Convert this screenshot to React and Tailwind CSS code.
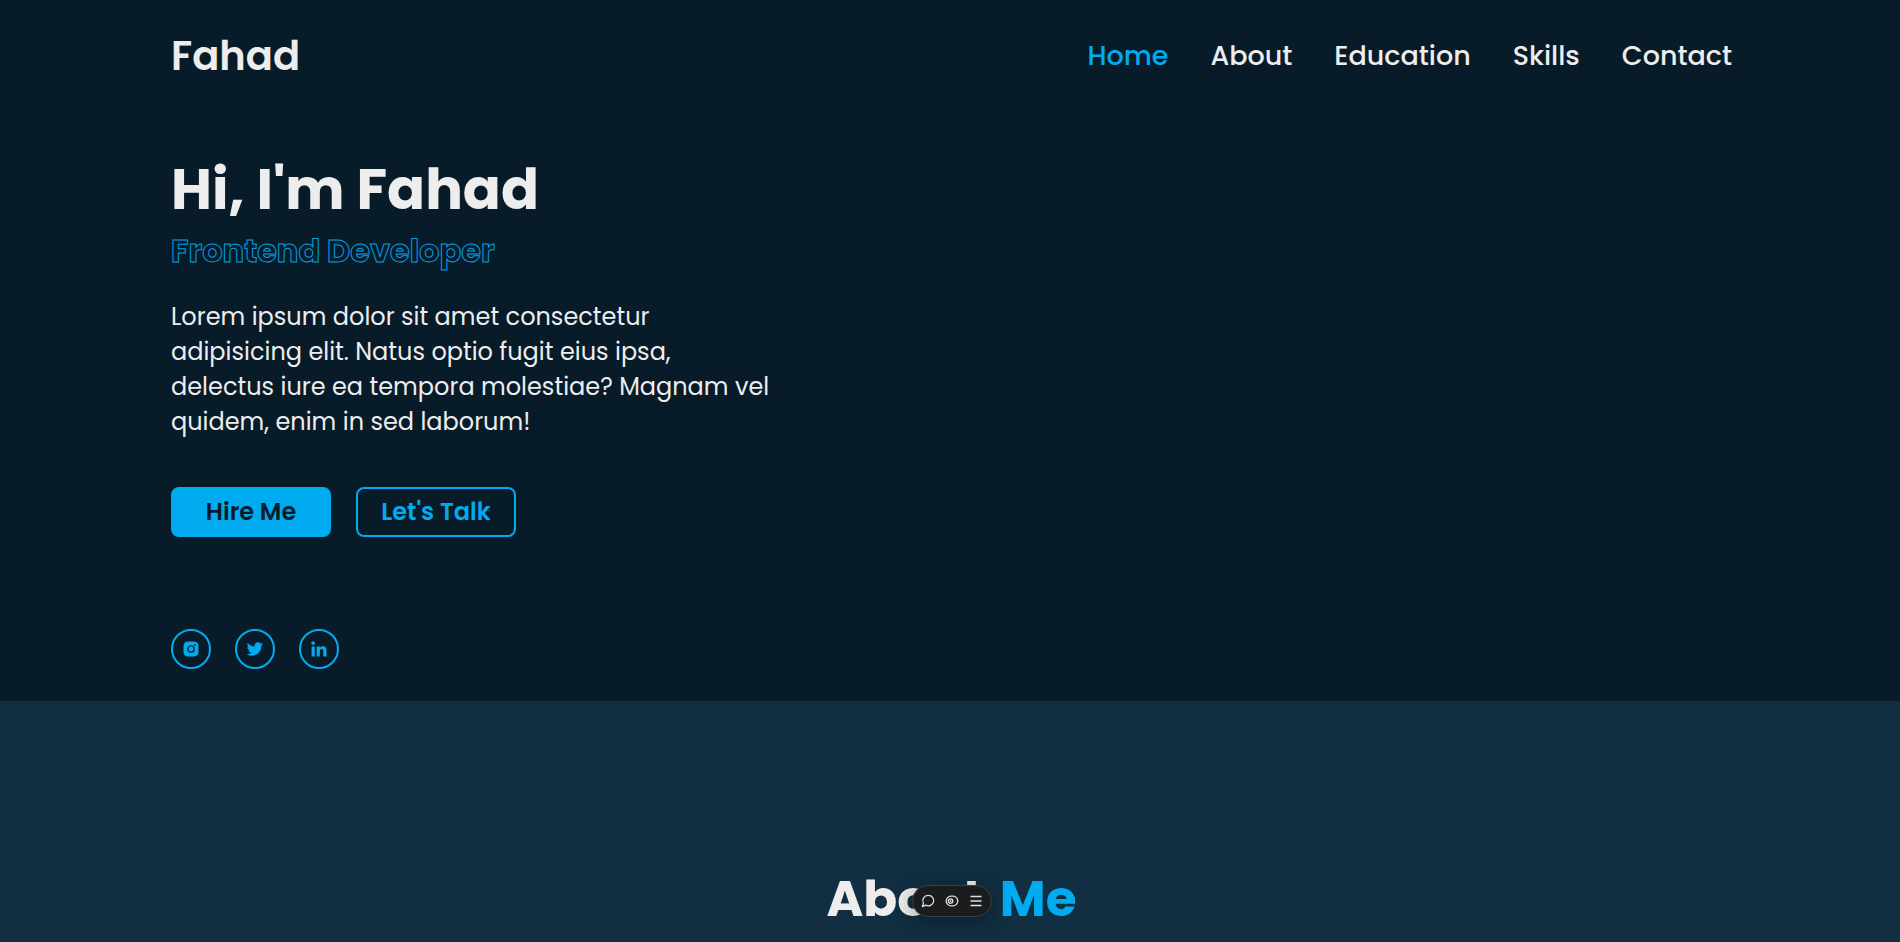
import { BiLogoInstagramAlt, BiLogoTwitter, BiLogoLinkedin } from "react-icons/bi";

const links = ["Home", "About", "Education", "Skills", "Contact"];

const socials = [
  { name: "Instagram", Icon: BiLogoInstagramAlt },
  { name: "Twitter", Icon: BiLogoTwitter },
  { name: "LinkedIn", Icon: BiLogoLinkedin },
];

function Header() {
  return (
    <header className="flex items-center justify-between pt-6 pr-42 pl-[9%]">
      <a href="#home" className="text-[40px] leading-[64px] font-semibold">
        Fahad
      </a>
      <nav className="flex gap-[42px]">
        {links.map((label) => (
          <a
            key={label}
            href={"#" + label.toLowerCase()}
            className={
              label === "Home"
                ? "text-[27px] leading-10 font-medium text-[#00abf0]"
                : "text-[27px] leading-10 font-medium"
            }
          >
            {label}
          </a>
        ))}
      </nav>
    </header>
  );
}

function Hero() {
  return (
    <section id="home" className="pt-[68px] pr-42 pb-8 pl-[9%]">
      <h1 className="text-[56px] leading-[68px] font-bold">Hi, I'm Fahad</h1>
      <h2 className="mt-[3px] text-[32px] leading-[48px] font-bold text-transparent [-webkit-text-stroke:1px_#00a0e2]">
        Frontend Developer
      </h2>
      <p className="mt-6 max-w-[600px] text-[24px] leading-[35px]">
        Lorem ipsum dolor sit amet consectetur adipisicing elit. Natus optio
        fugit eius ipsa, delectus iure ea tempora molestiae? Magnam vel quidem,
        enim in sed laborum!
      </p>
      <div className="mt-12 flex gap-[25px]">
        <button
          type="button"
          className="h-[50px] w-40 rounded-lg border-2 border-[#00abf0] bg-[#00abf0] text-2xl font-semibold text-[#081b29]"
        >
          Hire Me
        </button>
        <button
          type="button"
          className="h-[50px] w-40 rounded-lg border-2 border-[#00abf0] text-2xl font-semibold text-[#00abf0]"
        >
          Let's Talk
        </button>
      </div>
      <div className="mt-[92px] flex gap-6">
        {socials.map(({ name, Icon }) => (
          <a
            key={name}
            href={"#" + name.toLowerCase()}
            aria-label={name}
            className="flex size-10 items-center justify-center rounded-full border-2 border-[#00abf0] text-[#00abf0]"
          >
            <Icon className="size-5" />
          </a>
        ))}
      </div>
    </section>
  );
}

function Toolbar() {
  return (
    <div className="fixed inset-x-0 bottom-[25px] flex justify-center pl-1">
      <div className="flex h-8 w-20 items-center justify-center gap-2 rounded-full border border-[#3b3f42] bg-[#1a1c1e] text-[#dedede] shadow-[0_4px_20px_rgba(0,0,0,0.35)]">
        <button type="button" aria-label="Comments">
          <svg className="size-4" viewBox="0 0 16 16" fill="none" stroke="currentColor" strokeWidth="1.3" strokeLinejoin="round">
            <path d="M8.4 2.4a5.4 5.2 0 1 1-2.6 9.8L2.5 13.7l.9-3.6A5.4 5.2 0 0 1 8.4 2.4Z" />
          </svg>
        </button>
        <button type="button" aria-label="Preview">
          <svg className="size-4" viewBox="0 0 16 16" fill="none" stroke="currentColor" strokeWidth="1.3">
            <rect x="2.2" y="3.2" width="11.6" height="9.6" rx="4.8" />
            <circle cx="6.6" cy="8" r="2.2" />
            <circle cx="6.6" cy="8" r="0.3" />
          </svg>
        </button>
        <button type="button" aria-label="Menu">
          <svg className="size-4" viewBox="0 0 16 16" fill="none" stroke="currentColor" strokeWidth="1.3">
            <path d="M2.5 3.5h11M2.5 8h11M2.5 12.5h11" />
          </svg>
        </button>
      </div>
    </div>
  );
}

export default function App() {
  return (
    <div className="flex min-h-screen flex-col bg-[#081b29] font-[Poppins,Inter,sans-serif] text-[#ededed]">
      <Header />
      <Hero />
      <section id="about" className="grow bg-[#112e42] pt-[160px] pr-42 pl-[9%]">
        <h2 className="text-center text-[50px] leading-[75px] font-bold">
          About <span className="ml-1.5 text-[#00abf0]">Me</span>
        </h2>
      </section>
      <Toolbar />
    </div>
  );
}
